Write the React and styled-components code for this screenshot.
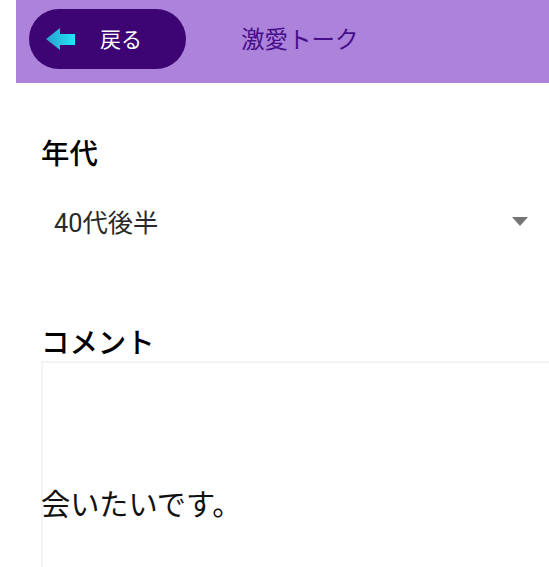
import React from "react";
import styled, { createGlobalStyle } from "styled-components";

const GlobalStyle = createGlobalStyle`
  * { box-sizing: border-box; }
  html, body, #root { height: 100%; margin: 0; background: #fff; }
  body { overflow: hidden; font-family: Roboto, "Noto Sans CJK JP", sans-serif; }
`;

export default function App() {
  return (
    <>
      <GlobalStyle />
      <Page>
        <Header>
          <BackButton type="button">
            <BackArrow />
            <BackLabel>戻る</BackLabel>
          </BackButton>
          <Title>激愛トーク</Title>
        </Header>
        <Form>
          <FieldLabel>年代</FieldLabel>
          <Select>
            <span>40代後半</span>
            <Caret />
          </Select>
          <CommentLabel>コメント</CommentLabel>
          <CommentBox>会いたいです。</CommentBox>
        </Form>
      </Page>
    </>
  );
}

function BackArrow() {
  return (
    <ArrowSvg viewBox="0 0 29 22" aria-hidden="true">
      <defs>
        <linearGradient id="arrowFill" x1="0" y1="0" x2="1" y2="0">
          <stop offset="0" stopColor="#2a9fcc" />
          <stop offset="1" stopColor="#20e8f6" />
        </linearGradient>
      </defs>
      <path d="M0 11 L14 0 V6 H29 V17 H14 V22 Z" fill="url(#arrowFill)" />
    </ArrowSvg>
  );
}

/* ===== styled ===== */
const Page = styled.div`
  height: 567px;
  overflow: hidden;
`;

const Header = styled.header`
  margin-left: 16px;
  height: 83px;
  background: #ad82da;
  display: flex;
  align-items: flex-start;
  padding: 9px 0 0 13px;
`;

const BackButton = styled.button`
  width: 157px;
  height: 60px;
  border: 0;
  border-radius: 30px;
  background: #3d0474;
  display: flex;
  align-items: center;
  padding: 0 0 0 17px;
  color: #fff;
  font-family: inherit;
`;

const ArrowSvg = styled.svg`
  width: 29px;
  height: 22px;
  flex: none;
`;

const BackLabel = styled.span`
  margin-left: 25px;
  padding-top: 2px;
  font-size: 21px;
  line-height: 1;
`;

const Title = styled.h1`
  margin: 19px 0 0 55px;
  font-size: 23.5px;
  line-height: 24px;
  font-weight: 400;
  color: #45108a;
`;

const Form = styled.main`
  padding: 54px 0 0 41px;
`;

const FieldLabel = styled.h2`
  margin: 0;
  font-size: 28.4px;
  line-height: 36px;
  font-weight: 500;
  color: #000;
`;

const Select = styled.div`
  height: 48px;
  margin-top: 24px;
  padding: 0 21px 0 13px;
  display: flex;
  align-items: center;
  justify-content: space-between;
  font-size: 25.3px;
  color: #2a2a2a;
`;

const Caret = styled.i`
  width: 0;
  height: 0;
  border-left: 8px solid transparent;
  border-right: 8px solid transparent;
  border-top: 9px solid #757575;
`;

const CommentLabel = styled(FieldLabel)`
  margin-top: 81px;
`;

const CommentBox = styled.div`
  height: 240px;
  margin-top: -1px;
  padding-top: 124px;
  border-top: 2px solid #f3f3f3;
  border-left: 2px solid #f3f3f3;
  font-size: 29.2px;
  line-height: 36px;
  color: #111;
  text-indent: -2px;
`;
